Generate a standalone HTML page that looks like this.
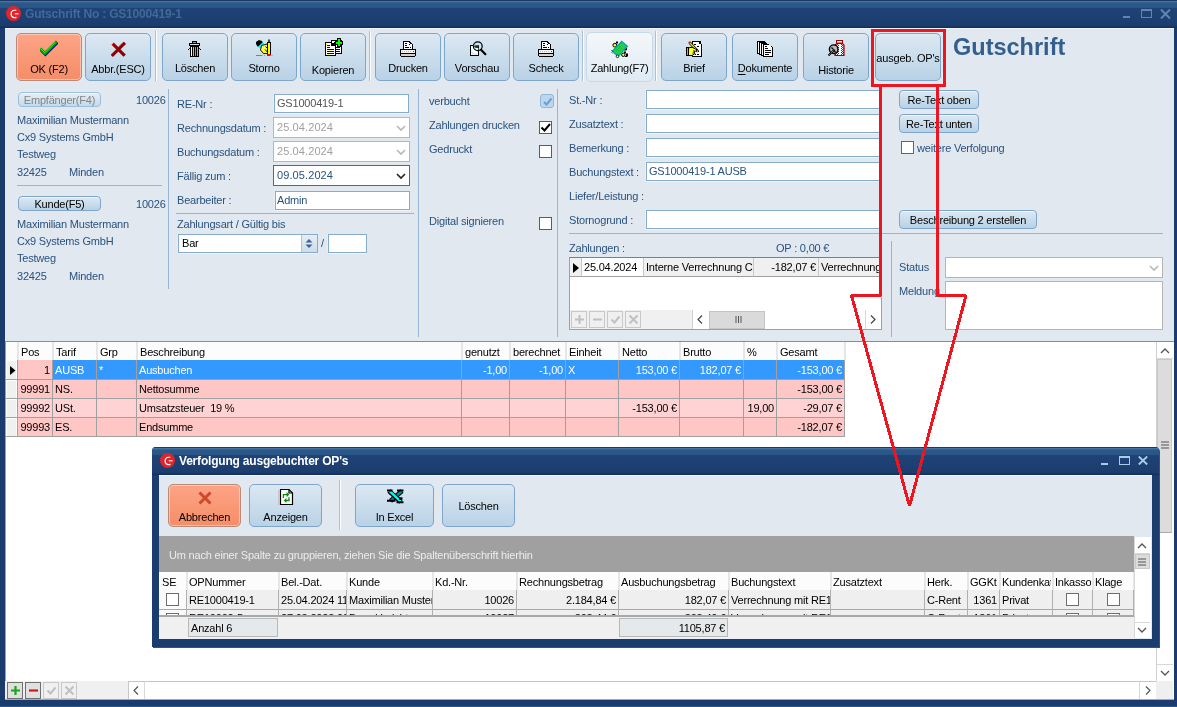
<!DOCTYPE html>
<html><head><meta charset="utf-8">
<style>
*{box-sizing:border-box;margin:0;padding:0}
html,body{width:1177px;height:707px;overflow:hidden}
#root{position:absolute;left:0;top:0;width:1177px;height:707px;will-change:transform}
body{position:relative;background:#1a3b6b;font-family:"Liberation Sans",sans-serif;font-size:11px;letter-spacing:-0.2px;color:#000}
.a{position:absolute}
.t{position:absolute;white-space:nowrap;line-height:13px}
.lbl{color:#28527f}
.tb{position:absolute;top:33px;width:66px;height:48px;border:1px solid #7ea5cb;border-radius:5px;background:linear-gradient(#dce8f2,#b9d2e6);text-align:center}
.tb .l{position:absolute;left:0;right:0;top:29px;line-height:13px;font-size:11px}
.tb svg{position:absolute;left:25px;top:8px}
.sep{position:absolute;width:2px;border-left:1px solid #a9c0d8;border-right:1px solid #fbfdff}
.inp{position:absolute;background:#fff;border:1px solid #87abcd;box-shadow:0 1px 0 rgba(255,255,255,.55),-1px 0 0 rgba(255,255,255,.3)}
.cmb{position:absolute;background:#fff;border:1px solid #b7b7b7}
.sb{position:absolute;height:19px;border:1px solid #7ea5cb;border-radius:4px;background:linear-gradient(#dce8f2,#b9d2e6);text-align:center;line-height:17px;padding-top:1px;box-shadow:inset 0 1px 0 rgba(255,255,255,.6)}
.chk{position:absolute;width:13px;height:13px;border:1px solid #5c5c5c;background:#fff}
.hl{position:absolute;height:1px;background:#97b5d5}
.vl{position:absolute;width:1px;background:#97b5d5}
</style></head><body><div id="root">
<!-- main title bar -->
<div class="a" style="left:0;top:0;width:1177px;height:28px;background:linear-gradient(#1c3a66 0px,#1c3a66 1px,#4a77a6 1px,#3f6c9b 2px,#2b5789 3px,#2a5587 7.5px,#1f4377 8.5px,#1c3c6d 26px,#10305f 27px,#10305f 28px)"></div>
<div class="a" style="left:6px;top:6px;width:15px;height:15px;border-radius:50%;background:#e0242b"></div>
<svg class="a" style="left:6px;top:6px" width="15" height="15" viewBox="0 0 15 15"><path d="M10.3 4.2 H8 A3.8 3.8 0 0 0 8 11.6 H9.6 L10.4 11" fill="none" stroke="#fff" stroke-width="1.1"/><path d="M8.8 7.8 H12.6" stroke="#fff" stroke-width="1.1"/></svg>
<div class="t" style="left:25px;top:7px;font-weight:bold;font-size:12px;color:#3e6b99;line-height:14px">Gutschrift No : GS1000419-1</div>
<div class="a" style="left:1123px;top:16px;width:7px;height:2px;background:#5d86b2"></div>
<div class="a" style="left:1141px;top:9px;width:11px;height:9px;border:1px solid #5d86b2;border-top-width:2px"></div>
<svg class="a" style="left:1160px;top:9px" width="11" height="10" viewBox="0 0 11 10"><path d="M1 0.5 L10 9.5 M10 0.5 L1 9.5" stroke="#5d86b2" stroke-width="2"/></svg>

<!-- content -->
<div class="a" style="left:5px;top:28px;width:1169px;height:672px;background:#e2e8f0;border-top:1px solid #f4f7fa"></div>


<!-- toolbar -->
<div class="tb" style="left:16px;border-color:#b98a78;background:linear-gradient(#fda486,#f58d68);box-shadow:inset 0 0 0 1px rgba(255,230,215,.55)"><svg width="18" height="18" viewBox="0 0 18 18" style="left:23px;top:6px"><path d="M1.6 10.6 L5.4 14.4 L16.4 3.4" fill="none" stroke="#000a80" stroke-width="3" stroke-linecap="square"/><path d="M1.2 9.6 L5 13.4 L15.8 2.6" fill="none" stroke="#089808" stroke-width="3" stroke-linecap="square"/><path d="M0.6 8.6 L5 13 M5.2 12.4 L15.4 2.2" fill="none" stroke="#2cff2c" stroke-width="1"/></svg><div class="l" style="top:29px">OK (F2)</div></div>
<div class="tb" style="left:85px"><svg width="16" height="16" viewBox="0 0 16 16" style="left:25px;top:8px"><path d="M2.8 2.8 L12.6 12.6 M12.8 1.9 L1.9 12.8" stroke="#880000" stroke-width="3.2" stroke-linecap="square"/><path d="M1.2 2.8 L2.8 1.2 M1.2 2.8 L5.5 7.1 M11.6 1.1 L6.9 5.8 M1.1 11.8 L4.9 8" stroke="#ff0c0c" stroke-width="0.9"/></svg><div class="l" style="top:29px">Abbr.(ESC)</div></div>
<div class="sep" style="left:155px;top:31px;height:50px"></div>
<div class="tb" style="left:162px"><svg width="14" height="17" viewBox="0 0 14 17" style="left:25px;top:7px" shape-rendering="crispEdges"><rect x="4" y="0" width="5" height="3" fill="#000"/><rect x="5" y="1" width="3" height="1" fill="#999"/><rect x="1" y="2" width="11" height="3" fill="#000"/><rect x="2" y="3" width="9" height="1" fill="#ddd"/><rect x="2" y="5" width="9" height="11" fill="#000"/><rect x="3" y="6" width="1" height="9" fill="#fff"/><rect x="5" y="6" width="1" height="9" fill="#bbb"/><rect x="7" y="6" width="1" height="9" fill="#999"/><rect x="9" y="6" width="1" height="9" fill="#aaa"/><rect x="0" y="8" width="1" height="1" fill="#000"/><rect x="12" y="8" width="1" height="1" fill="#000"/><rect x="1" y="7" width="1" height="1" fill="#333"/><rect x="11" y="7" width="1" height="1" fill="#333"/></svg><div class="l" style="top:28px">Löschen</div></div>
<div class="tb" style="left:231px"><svg width="24" height="20" viewBox="0 0 24 20" style="left:20px;top:4px"><path d="M4 4 L7 2 L10 3 L11.5 6 L8 9.5 L5.5 8.5 L4 6z" fill="#000"/><path d="M6 8.5 L10.8 4.2 L12 6.6 L7.6 10.4z" fill="#19f0f0"/><path d="M9.5 7.5 L15 6 L17 12.5 L15 15.5 L11.5 15.5 L8.5 12z" fill="#ffff00" stroke="#000" stroke-width="0.9"/><path d="M10 9h1M12 9h1M10 11h1M12 11h1M11 13h1" stroke="#fff" stroke-width="1"/><path d="M13.5 8.5 L16 11 M13 11.5 L15.5 14" stroke="#000" stroke-width="1"/><rect x="15.5" y="4.5" width="3" height="12" fill="#ffff00" stroke="#000" stroke-width="1"/><path d="M17 1.5 V4.5" stroke="#000" stroke-width="1.4"/><rect x="15" y="16" width="3.6" height="2" fill="#ff0000"/><path d="M4 17.5 H10.5" stroke="#808080" stroke-width="1"/><path d="M12 17.5h1M19.5 17.5h1" stroke="#999"/></svg><div class="l" style="top:28px">Storno</div></div>
<div class="tb" style="left:300px"><svg width="22" height="22" viewBox="0 0 22 22" style="left:21px;top:1px" shape-rendering="crispEdges"><rect x="9" y="5" width="11" height="14" fill="#000"/><rect x="10" y="6" width="9" height="12" fill="#fff"/><rect x="11" y="12" width="7" height="1" fill="#000080"/><rect x="11" y="14" width="7" height="1" fill="#000080"/><rect x="11" y="16" width="7" height="1" fill="#000080"/><rect x="3" y="7" width="11" height="14" fill="#000"/><rect x="4" y="8" width="9" height="12" fill="#fff"/><rect x="5" y="10" width="3" height="1" fill="#000080"/><rect x="5" y="12" width="3" height="1" fill="#000080"/><rect x="5" y="14" width="7" height="1" fill="#000080"/><rect x="5" y="16" width="7" height="1" fill="#000080"/><rect x="5" y="18" width="7" height="1" fill="#000080"/><rect x="9" y="7" width="4" height="4" fill="#000"/><rect x="10" y="6" width="2" height="2" fill="#fff"/><rect x="4" y="9" width="1" height="1" fill="#ff0"/><rect x="8" y="15" width="1" height="1" fill="#ff0"/><rect x="6" y="19" width="1" height="1" fill="#ff0"/><rect x="15" y="3" width="4" height="9" fill="#000"/><rect x="13" y="6" width="8" height="4" fill="#000"/><rect x="14" y="7" width="6" height="2" fill="#00ff00"/><rect x="16" y="4" width="2" height="7" fill="#00ff00"/></svg><div class="l" style="top:30px">Kopieren</div></div>
<div class="sep" style="left:369px;top:31px;height:50px"></div>
<div class="tb" style="left:375px"><svg width="16" height="16" viewBox="0 0 16 16" style="left:24px;top:7px" shape-rendering="crispEdges"><rect x="3" y="0" width="7" height="9" fill="#000"/><rect x="10" y="1" width="1" height="8" fill="#000"/><rect x="11" y="2" width="1" height="7" fill="#000"/><rect x="12" y="3" width="1" height="6" fill="#000"/><rect x="4" y="1" width="5" height="8" fill="#fff"/><rect x="9" y="3" width="3" height="6" fill="#fff"/><rect x="9" y="2" width="1" height="1" fill="#fff"/><rect x="5" y="2" width="2" height="1" fill="#000"/><rect x="5" y="4" width="2" height="1" fill="#000"/><rect x="5" y="6" width="4" height="1" fill="#000"/><rect x="10" y="6" width="1" height="1" fill="#000"/><rect x="9" y="3" width="1" height="1" fill="#000"/><rect x="0" y="8" width="16" height="7" fill="#000"/><rect x="1" y="9" width="14" height="3" fill="#f4f4f4"/><rect x="2" y="10" width="1" height="1" fill="#bbb"/><rect x="4" y="10" width="1" height="1" fill="#bbb"/><rect x="6" y="10" width="1" height="1" fill="#bbb"/><rect x="8" y="10" width="1" height="1" fill="#bbb"/><rect x="10" y="10" width="1" height="1" fill="#bbb"/><rect x="13" y="10" width="1" height="1" fill="#f00"/><rect x="1" y="13" width="14" height="2" fill="#d4d4d4"/><rect x="1" y="15" width="14" height="1" fill="#000"/></svg><div class="l" style="top:28px">Drucken</div></div>
<div class="tb" style="left:444px"><svg width="20" height="20" viewBox="0 0 20 20" style="left:23px;top:4px"><rect x="2.5" y="7.5" width="8" height="10" fill="#fff" stroke="#000" stroke-width="1"/><path d="M4 13 V16 H9" fill="none" stroke="#c4d8e8" stroke-width="1"/><circle cx="9.8" cy="8.2" r="4.4" fill="rgba(200,225,240,.35)" stroke="#000" stroke-width="1.2"/><path d="M6 8.5 H11 M6.5 9.5 H11" stroke="#000" stroke-width="0.8"/><path d="M5.8 8 L7.5 7 M6 9.6 L7.6 10" stroke="#00e8f0" stroke-width="1.1"/><path d="M13 11.8 L17.4 16.2" stroke="#000" stroke-width="2.2" stroke-linecap="round"/></svg><div class="l" style="top:28px">Vorschau</div></div>
<div class="tb" style="left:513px"><svg width="16" height="16" viewBox="0 0 16 16" style="left:24px;top:7px" shape-rendering="crispEdges"><rect x="3" y="0" width="7" height="9" fill="#000"/><rect x="10" y="1" width="1" height="8" fill="#000"/><rect x="11" y="2" width="1" height="7" fill="#000"/><rect x="12" y="3" width="1" height="6" fill="#000"/><rect x="4" y="1" width="5" height="8" fill="#fff"/><rect x="9" y="3" width="3" height="6" fill="#fff"/><rect x="9" y="2" width="1" height="1" fill="#fff"/><rect x="5" y="2" width="2" height="1" fill="#000"/><rect x="5" y="4" width="2" height="1" fill="#000"/><rect x="5" y="6" width="4" height="1" fill="#000"/><rect x="10" y="6" width="1" height="1" fill="#000"/><rect x="9" y="3" width="1" height="1" fill="#000"/><rect x="0" y="8" width="16" height="7" fill="#000"/><rect x="1" y="9" width="14" height="3" fill="#f4f4f4"/><rect x="2" y="10" width="1" height="1" fill="#bbb"/><rect x="4" y="10" width="1" height="1" fill="#bbb"/><rect x="6" y="10" width="1" height="1" fill="#bbb"/><rect x="8" y="10" width="1" height="1" fill="#bbb"/><rect x="10" y="10" width="1" height="1" fill="#bbb"/><rect x="13" y="10" width="1" height="1" fill="#f00"/><rect x="1" y="13" width="14" height="2" fill="#d4d4d4"/><rect x="1" y="15" width="14" height="1" fill="#000"/></svg><div class="l" style="top:28px">Scheck</div></div>
<div class="sep" style="left:582px;top:31px;height:50px"></div>
<div class="tb" style="left:586px;top:32px;width:67px;height:50px;border-color:#c4d9ea;background:linear-gradient(#f4f7fa,#dfeaf3)"><svg width="19" height="20" viewBox="0 0 19 20" style="left:24px;top:6px"><path d="M5 2.5h2v2h-2z M3 4.5h1v1h-1z" fill="#000"/><circle cx="3.8" cy="6.2" r="1.9" fill="#f8f050" stroke="#000" stroke-width="1"/><path d="M13 8.5h3v3h-3z M13 12.5h2v2h-2z M15 14.5h2v3h-2z M14 17h2v1h-2z" fill="#000"/><path d="M15 11.5h2v2h-2z" fill="#fff"/><circle cx="12.3" cy="15.8" r="1.7" fill="#f8f050" stroke="#000" stroke-width="1"/><path d="M1.5 12 L10.7 2.5 L16.3 7.3 L7 17.5 z" fill="#22d040" stroke="#00a8a8" stroke-width="1.4"/><path d="M5 12 L10 7 M7 13 L11 9" stroke="#2a8a50" stroke-width="0.7" stroke-dasharray="1 1"/><path d="M0.6 11.5 L1.6 12.5 M0.8 13.5 L1.6 14.3" stroke="#000" stroke-width="1"/><circle cx="6.5" cy="17.3" r="1.3" fill="#eee" stroke="#000" stroke-width="0.8"/></svg><div class="l" style="top:29px">Zahlung(F7)</div></div>
<div class="sep" style="left:655px;top:31px;height:50px"></div>
<div class="tb" style="left:661px"><svg width="18" height="19" viewBox="0 0 18 19" style="left:23px;top:5px" shape-rendering="crispEdges"><rect x="7" y="2" width="9" height="16" fill="#000"/><rect x="16" y="5" width="1" height="13" fill="#000"/><rect x="8" y="3" width="7" height="14" fill="#fff"/><rect x="15" y="5" width="1" height="12" fill="#fff"/><rect x="14" y="3" width="1" height="2" fill="#000"/><rect x="15" y="4" width="1" height="1" fill="#000"/><rect x="9" y="5" width="2" height="1" fill="#000"/><rect x="12" y="7" width="2" height="1" fill="#000"/><rect x="13" y="12" width="1" height="1" fill="#000"/><rect x="10" y="15" width="1" height="1" fill="#000"/><rect x="12" y="15" width="2" height="1" fill="#000"/></svg><svg width="18" height="19" viewBox="0 0 18 19" style="left:23px;top:5px"><path d="M4.5 3.5 L13 12.5" stroke="#000" stroke-width="2.6"/><path d="M4.5 3.5 L13 12.5" stroke="#f0f000" stroke-width="1.2"/><rect x="3.6" y="2.6" width="1.6" height="1.6" fill="#f00"/><path d="M3 9 L7 8.2 L10.5 10 L12.5 11 L10.5 12.2 L9 13 L10 14.5 L7 16.5 L3 16.5z" fill="#ffff30" stroke="#000" stroke-width="1"/><path d="M8 12 H10 M7.5 14 H9.5" stroke="#000" stroke-width="0.9"/><rect x="1.5" y="8.5" width="2" height="8" fill="#10e0f0" stroke="#000" stroke-width="1"/></svg><div class="l" style="top:28px">Brief</div></div>
<div class="tb" style="left:732px"><svg width="17" height="17" viewBox="0 0 17 17" style="left:24px;top:7px" shape-rendering="crispEdges"><path d="M0 0 H7 L16 6.5 V16 H6 V15 H4 V14 H2 V13 H0 Z" fill="#000"/><rect x="1" y="1" width="1" height="11" fill="#fff"/><rect x="3" y="2" width="1" height="11" fill="#fff"/><rect x="5" y="3" width="1" height="11" fill="#fff"/><rect x="7" y="4" width="6" height="11" fill="#fff"/><rect x="13" y="6" width="2" height="9" fill="#fff"/><rect x="8" y="5" width="2" height="1" fill="#000"/><rect x="8" y="7" width="3" height="1" fill="#000"/><rect x="8" y="9" width="6" height="1" fill="#000"/><rect x="8" y="11" width="6" height="1" fill="#000"/><rect x="8" y="13" width="4" height="1" fill="#000"/><rect x="13" y="5" width="1" height="1" fill="#fff"/></svg><div class="l" style="top:28px"><u style="text-decoration-thickness:1px;text-underline-offset:2px">D</u>okumente</div></div>
<div class="tb" style="left:803px"><svg width="21" height="20" viewBox="0 0 21 20" style="left:21px;top:4px"><defs><pattern id="chk" width="2" height="2" patternUnits="userSpaceOnUse"><rect width="2" height="2" fill="#fff"/><rect width="1" height="1" fill="#b01010"/><rect x="1" y="1" width="1" height="1" fill="#b01010"/></pattern></defs><rect x="11.5" y="2.5" width="6" height="2.5" fill="#fff" stroke="#a00000" stroke-width="1"/><path d="M12 5.5 H17.5 L19 7 V17.5 H10 V7 Z" fill="url(#chk)" stroke="#a00000" stroke-width="1.2"/><rect x="14" y="6" width="2" height="11" fill="#fff"/><circle cx="8.7" cy="11.2" r="4.3" fill="#b8b8b8" stroke="#000" stroke-width="1.4"/><path d="M6.5 9.5 L8 11 M9 12.5 L10.5 14" stroke="#000" stroke-width="1.2"/><path d="M3.5 17.5 L9.5 11.5" stroke="#000" stroke-width="1.8"/><path d="M4.5 16.5 L9 12" stroke="#fff" stroke-width="0.8" stroke-dasharray="1 1"/></svg><div class="l" style="top:30px">Historie</div></div>
<div class="tb" style="left:875px"><div class="l" style="top:18px">ausgeb. OP's</div></div>
<div class="t" style="left:953px;top:33px;font-size:23.5px;line-height:28px;font-weight:bold;color:#325f8e;letter-spacing:0">Gutschrift</div>


<!-- form left: Empfänger -->
<div class="sb" style="left:18px;top:92px;width:83px;height:15px;line-height:14px;padding-top:0;color:#858585;border-radius:4px;border-color:#98bfdd;background:linear-gradient(#e6eef5,#c6dae9)">Empfänger(F4)</div>
<div class="t lbl" style="left:136px;top:94px">10026</div>
<div class="t lbl" style="left:17px;top:114px">Maximilian Mustermann</div>
<div class="t lbl" style="left:17px;top:131px">Cx9 Systems GmbH</div>
<div class="t lbl" style="left:17px;top:148px">Testweg</div>
<div class="t lbl" style="left:17px;top:166px">32425</div>
<div class="t lbl" style="left:69px;top:166px">Minden</div>
<div class="hl" style="left:17px;top:185px;width:145px"></div>
<div class="sb" style="left:18px;top:196px;width:83px;height:15px;line-height:14px;padding-top:0;border-radius:4px">Kunde(F5)</div>
<div class="t lbl" style="left:136px;top:198px">10026</div>
<div class="t lbl" style="left:17px;top:218px">Maximilian Mustermann</div>
<div class="t lbl" style="left:17px;top:235px">Cx9 Systems GmbH</div>
<div class="t lbl" style="left:17px;top:252px">Testweg</div>
<div class="t lbl" style="left:17px;top:270px">32425</div>
<div class="t lbl" style="left:69px;top:270px">Minden</div>
<div class="vl" style="left:168px;top:89px;height:200px"></div>

<!-- form col 2 -->
<div class="t lbl" style="left:177px;top:98px">RE-Nr :</div>
<div class="t lbl" style="left:177px;top:122px">Rechnungsdatum :</div>
<div class="t lbl" style="left:177px;top:146px">Buchungsdatum :</div>
<div class="t lbl" style="left:177px;top:170px">Fällig zum :</div>
<div class="t lbl" style="left:177px;top:194px">Bearbeiter :</div>
<div class="inp" style="left:274px;top:94px;width:135px;height:19px"><div class="t" style="left:2px;top:2px;color:#555">GS1000419-1</div></div>
<div class="cmb" style="left:273px;top:117px;width:137px;height:21px"><div class="t" style="left:3px;top:3px;color:#a0a0a0;letter-spacing:0.1px">25.04.2024</div><svg class="a" style="left:122px;top:7px" width="10" height="7"><path d="M1 1 L5 5 L9 1" fill="none" stroke="#b8b8b8" stroke-width="1.6"/></svg></div>
<div class="cmb" style="left:273px;top:141px;width:137px;height:21px"><div class="t" style="left:3px;top:3px;color:#a0a0a0;letter-spacing:0.1px">25.04.2024</div><svg class="a" style="left:122px;top:7px" width="10" height="7"><path d="M1 1 L5 5 L9 1" fill="none" stroke="#b8b8b8" stroke-width="1.6"/></svg></div>
<div class="cmb" style="left:273px;top:165px;width:137px;height:21px;border-color:#646464"><div class="t" style="left:3px;top:3px;color:#28527f;letter-spacing:0.1px">09.05.2024</div><svg class="a" style="left:122px;top:7px" width="10" height="7"><path d="M1 1 L5 5 L9 1" fill="none" stroke="#222" stroke-width="1.6"/></svg></div>
<div class="inp" style="left:275px;top:191px;width:135px;height:19px"><div class="t" style="left:1px;top:2px;color:#28527f">Admin</div></div>
<div class="hl" style="left:176px;top:213px;width:238px"></div>
<div class="t lbl" style="left:177px;top:218px">Zahlungsart / Gültig bis</div>
<div class="inp" style="left:178px;top:234px;width:140px;height:19px"><div class="t" style="left:3px;top:2px">Bar</div><div class="a" style="left:122px;top:0;width:16px;height:17px;background:linear-gradient(#e6eef5,#cddcea);border-left:1px solid #a9c3dc"></div><svg class="a" style="left:125px;top:3px" width="10" height="12"><path d="M1.5 4.5 L5 1 L8.5 4.5z M1.5 6.5 L5 10 L8.5 6.5z" fill="#3d6592"/></svg></div>
<div class="t lbl" style="left:321px;top:237px">/</div>
<div class="inp" style="left:328px;top:234px;width:39px;height:19px"></div>
<div class="vl" style="left:418px;top:89px;height:248px"></div>

<!-- form col 3 -->
<div class="t lbl" style="left:429px;top:95px">verbucht</div>
<div class="t lbl" style="left:429px;top:119px">Zahlungen drucken</div>
<div class="t lbl" style="left:429px;top:143px">Gedruckt</div>
<div class="t lbl" style="left:429px;top:215px">Digital signieren</div>
<div class="chk" style="left:540px;top:94px;width:14px;height:14px;border-color:#8fb8dc;background:#bcd6ee;border-radius:3px"><svg class="a" style="left:1px;top:1px" width="11" height="11"><path d="M2 6 L4.5 8.5 L9.5 2.5" fill="none" stroke="#6d9fd2" stroke-width="2"/></svg></div>
<div class="chk" style="left:539px;top:121px"><svg class="a" style="left:0px;top:0px" width="11" height="11"><path d="M1.5 5.5 L4.5 8.5 L10 2" fill="none" stroke="#000" stroke-width="2"/></svg></div>
<div class="chk" style="left:539px;top:145px"></div>
<div class="chk" style="left:539px;top:217px"></div>
<div class="vl" style="left:557px;top:89px;height:248px"></div>

<!-- form col 4 -->
<div class="t lbl" style="left:569px;top:94px">St.-Nr :</div>
<div class="t lbl" style="left:569px;top:118px">Zusatztext :</div>
<div class="t lbl" style="left:569px;top:142px">Bemerkung :</div>
<div class="t lbl" style="left:569px;top:166px">Buchungstext :</div>
<div class="t lbl" style="left:569px;top:190px">Liefer/Leistung :</div>
<div class="t lbl" style="left:569px;top:214px">Stornogrund :</div>
<div class="inp" style="left:646px;top:90px;width:236px;height:19px"></div>
<div class="inp" style="left:646px;top:114px;width:236px;height:19px"></div>
<div class="inp" style="left:646px;top:138px;width:236px;height:19px"></div>
<div class="inp" style="left:646px;top:162px;width:236px;height:19px"><div class="t" style="left:2px;top:2px;color:#28527f">GS1000419-1 AUSB</div></div>
<div class="inp" style="left:646px;top:210px;width:236px;height:19px"></div>
<div class="hl" style="left:569px;top:233px;width:594px"></div>

<div class="sb" style="left:899px;top:90px;width:80px;height:19px">Re-Text oben</div>
<div class="sb" style="left:899px;top:114px;width:80px;height:19px">Re-Text unten</div>
<div class="chk" style="left:901px;top:141px;border-color:#646464"></div>
<div class="t lbl" style="left:917px;top:142px">weitere Verfolgung</div>
<div class="sb" style="left:899px;top:210px;width:138px;height:19px">Beschreibung 2 erstellen</div>

<!-- Zahlungen grid -->
<div class="t lbl" style="left:569px;top:242px">Zahlungen :</div>
<div class="t lbl" style="left:776px;top:242px">OP : 0,00 €</div>
<div class="a" style="left:569px;top:257px;width:313px;height:73px;background:#fff;border:1px solid #a0a0a0;border-top-color:#808080"></div>
<div class="a" style="left:570px;top:258px;width:12px;height:19px;background:#f0f0f0;border-right:1px solid #c8c8c8;border-bottom:1px solid #a0a0a0"></div>
<svg class="a" style="left:573px;top:263px" width="6" height="10"><path d="M0 0 L6 5 L0 10z" fill="#000"/></svg>
<div class="a" style="left:582px;top:258px;width:62px;height:19px;background:#fff;border-right:1px solid #c8c8c8;border-bottom:1px solid #a0a0a0"><div class="t" style="left:2px;top:3px">25.04.2024</div></div>
<div class="a" style="left:644px;top:258px;width:110px;height:19px;background:#f0f0f0;border-right:1px solid #c8c8c8;border-bottom:1px solid #a0a0a0;overflow:hidden"><div class="t" style="left:2px;top:3px">Interne Verrechnung C</div></div>
<div class="a" style="left:754px;top:258px;width:65px;height:19px;background:#f0f0f0;border-right:1px solid #c8c8c8;border-bottom:1px solid #a0a0a0"><div class="t" style="right:2px;top:3px">-182,07 €</div></div>
<div class="a" style="left:819px;top:258px;width:62px;height:19px;background:#f0f0f0;border-bottom:1px solid #a0a0a0;overflow:hidden"><div class="t" style="left:2px;top:3px">Verrechnung</div></div>
<div class="a" style="left:570px;top:310px;width:311px;height:19px;background:#f0f0f0"></div>
<div class="a" style="left:692px;top:310px;width:189px;height:19px;background:#fff;border-left:1px solid #d0d0d0"></div>
<div class="a" style="left:709px;top:311px;width:56px;height:18px;background:#dadada;border:1px solid #c4c4c4"></div>
<div class="a" style="left:865px;top:310px;width:1px;height:19px;background:#d8d8d8"></div>


<!-- zahlungen navigator -->
<div class="a" style="left:571px;top:311px;width:16px;height:17px;border:1px solid #c8c8c8;background:#f0f0f0"><svg class="a" style="left:2px;top:2px" width="11" height="11"><path d="M5.5 1v9M1 5.5h9" stroke="#c0c0c0" stroke-width="2"/></svg></div>
<div class="a" style="left:589px;top:311px;width:16px;height:17px;border:1px solid #c8c8c8;background:#f0f0f0"><svg class="a" style="left:2px;top:2px" width="11" height="11"><path d="M1 5.5h9" stroke="#c0c0c0" stroke-width="2"/></svg></div>
<div class="a" style="left:607px;top:311px;width:16px;height:17px;border:1px solid #c8c8c8;background:#f0f0f0"><svg class="a" style="left:2px;top:2px" width="11" height="11"><path d="M1.5 5.5 L4.5 8.5 L9.5 2.5" fill="none" stroke="#c0c0c0" stroke-width="2"/></svg></div>
<div class="a" style="left:625px;top:311px;width:16px;height:17px;border:1px solid #c8c8c8;background:#f0f0f0"><svg class="a" style="left:2px;top:2px" width="11" height="11"><path d="M1.5 1.5 L9.5 9.5 M9.5 1.5 L1.5 9.5" fill="none" stroke="#c0c0c0" stroke-width="2"/></svg></div>
<svg class="a" style="left:697px;top:315px" width="6" height="9"><path d="M5 0.5 L1 4.5 L5 8.5" fill="none" stroke="#444" stroke-width="1.2"/></svg>
<svg class="a" style="left:735px;top:316px" width="7" height="7"><path d="M1 0v7M3.5 0v7M6 0v7" stroke="#555" stroke-width="1"/></svg>
<svg class="a" style="left:870px;top:315px" width="6" height="9"><path d="M1 0.5 L5 4.5 L1 8.5" fill="none" stroke="#444" stroke-width="1.2"/></svg>

<!-- status section -->
<div class="vl" style="left:891px;top:241px;height:96px"></div>
<div class="t lbl" style="left:899px;top:261px">Status</div>
<div class="t lbl" style="left:899px;top:285px">Meldung</div>
<div class="cmb" style="left:945px;top:257px;width:218px;height:21px;border-color:#b4b4b4"><svg class="a" style="left:203px;top:7px" width="10" height="7"><path d="M1 1 L5 5 L9 1" fill="none" stroke="#b8b8b8" stroke-width="1.6"/></svg></div>
<div class="cmb" style="left:945px;top:281px;width:218px;height:49px;border-color:#b4b4b4"></div>

<!-- main grid -->
<div class="a" style="left:5px;top:341px;width:1169px;height:359px;background:#fff;border-top:1px solid #8c8c8c;border-left:1px solid #a0a0a0"></div>

<!-- main grid rows -->
<div class="a" style="left:6px;top:342px;width:839px;height:18px;background:#fcfcfc"></div>
<div class="a" style="left:17px;top:342px;width:2px;height:18px;background:#e6e6e6"></div>
<div class="a" style="left:52px;top:342px;width:2px;height:18px;background:#e6e6e6"></div>
<div class="a" style="left:96px;top:342px;width:2px;height:18px;background:#e6e6e6"></div>
<div class="a" style="left:136px;top:342px;width:2px;height:18px;background:#e6e6e6"></div>
<div class="a" style="left:461px;top:342px;width:2px;height:18px;background:#e6e6e6"></div>
<div class="a" style="left:509px;top:342px;width:2px;height:18px;background:#e6e6e6"></div>
<div class="a" style="left:565px;top:342px;width:2px;height:18px;background:#e6e6e6"></div>
<div class="a" style="left:618px;top:342px;width:2px;height:18px;background:#e6e6e6"></div>
<div class="a" style="left:679px;top:342px;width:2px;height:18px;background:#e6e6e6"></div>
<div class="a" style="left:743px;top:342px;width:2px;height:18px;background:#e6e6e6"></div>
<div class="a" style="left:776px;top:342px;width:2px;height:18px;background:#e6e6e6"></div>
<div class="a" style="left:844px;top:342px;width:2px;height:18px;background:#e6e6e6"></div>
<div class="t" style="left:21px;top:346px">Pos</div>
<div class="t" style="left:56px;top:346px">Tarif</div>
<div class="t" style="left:100px;top:346px">Grp</div>
<div class="t" style="left:140px;top:346px">Beschreibung</div>
<div class="t" style="left:465px;top:346px">genutzt</div>
<div class="t" style="left:513px;top:346px">berechnet</div>
<div class="t" style="left:569px;top:346px">Einheit</div>
<div class="t" style="left:622px;top:346px">Netto</div>
<div class="t" style="left:683px;top:346px">Brutto</div>
<div class="t" style="left:747px;top:346px">%</div>
<div class="t" style="left:780px;top:346px">Gesamt</div>
<div class="a" style="left:6px;top:360px;width:11px;height:19px;background:#f0f0f0;border-left:1px solid #fff;border-top:1px solid #fff;border-right:1px solid #fff"></div>
<div class="a" style="left:18px;top:360px;width:34px;height:19px;background:#ffc6c6"><div class="t" style="right:2px;top:4px;color:#000">1</div></div>
<div class="a" style="left:53px;top:360px;width:43px;height:19px;background:#3399ff"><div class="t" style="left:2px;top:4px;color:#fff">AUSB</div></div>
<div class="a" style="left:97px;top:360px;width:39px;height:19px;background:#3399ff"><div class="t" style="left:2px;top:4px;color:#fff">*</div></div>
<div class="a" style="left:137px;top:360px;width:324px;height:19px;background:#3399ff"><div class="t" style="left:2px;top:4px;color:#fff">Ausbuchen</div></div>
<div class="a" style="left:462px;top:360px;width:47px;height:19px;background:#3399ff"><div class="t" style="right:2px;top:4px;color:#fff">-1,00</div></div>
<div class="a" style="left:510px;top:360px;width:55px;height:19px;background:#3399ff"><div class="t" style="right:2px;top:4px;color:#fff">-1,00</div></div>
<div class="a" style="left:566px;top:360px;width:52px;height:19px;background:#3399ff"><div class="t" style="left:2px;top:4px;color:#fff">X</div></div>
<div class="a" style="left:619px;top:360px;width:60px;height:19px;background:#3399ff"><div class="t" style="right:2px;top:4px;color:#fff">153,00 €</div></div>
<div class="a" style="left:680px;top:360px;width:63px;height:19px;background:#3399ff"><div class="t" style="right:2px;top:4px;color:#fff">182,07 €</div></div>
<div class="a" style="left:744px;top:360px;width:32px;height:19px;background:#3399ff"></div>
<div class="a" style="left:777px;top:360px;width:67px;height:19px;background:#3399ff"><div class="t" style="right:2px;top:4px;color:#fff">-153,00 €</div></div>
<div class="a" style="left:6px;top:379px;width:839px;height:1px;background:#a0a0a0"></div>
<div class="a" style="left:6px;top:380px;width:11px;height:18px;background:#f0f0f0;border-left:1px solid #fff;border-top:1px solid #fff;border-right:1px solid #fff"></div>
<div class="a" style="left:18px;top:380px;width:34px;height:18px;background:#ffc6c6"><div class="t" style="right:2px;top:3px;color:#000">99991</div></div>
<div class="a" style="left:53px;top:380px;width:43px;height:18px;background:#ffc6c6"><div class="t" style="left:2px;top:3px;color:#000">NS.</div></div>
<div class="a" style="left:97px;top:380px;width:39px;height:18px;background:#ffc6c6"></div>
<div class="a" style="left:137px;top:380px;width:324px;height:18px;background:#ffc6c6"><div class="t" style="left:2px;top:3px;color:#000">Nettosumme</div></div>
<div class="a" style="left:462px;top:380px;width:47px;height:18px;background:#ffc6c6"></div>
<div class="a" style="left:510px;top:380px;width:55px;height:18px;background:#ffc6c6"></div>
<div class="a" style="left:566px;top:380px;width:52px;height:18px;background:#ffc6c6"></div>
<div class="a" style="left:619px;top:380px;width:60px;height:18px;background:#ffc6c6"></div>
<div class="a" style="left:680px;top:380px;width:63px;height:18px;background:#ffc6c6"></div>
<div class="a" style="left:744px;top:380px;width:32px;height:18px;background:#ffc6c6"></div>
<div class="a" style="left:777px;top:380px;width:67px;height:18px;background:#ffc6c6"><div class="t" style="right:2px;top:3px;color:#000">-153,00 €</div></div>
<div class="a" style="left:6px;top:398px;width:839px;height:1px;background:#a0a0a0"></div>
<div class="a" style="left:6px;top:399px;width:11px;height:18px;background:#f0f0f0;border-left:1px solid #fff;border-top:1px solid #fff;border-right:1px solid #fff"></div>
<div class="a" style="left:18px;top:399px;width:34px;height:18px;background:#ffd3d3"><div class="t" style="right:2px;top:3px;color:#000">99992</div></div>
<div class="a" style="left:53px;top:399px;width:43px;height:18px;background:#ffd3d3"><div class="t" style="left:2px;top:3px;color:#000">USt.</div></div>
<div class="a" style="left:97px;top:399px;width:39px;height:18px;background:#ffd3d3"></div>
<div class="a" style="left:137px;top:399px;width:324px;height:18px;background:#ffd3d3"><div class="t" style="left:2px;top:3px;color:#000">Umsatzsteuer&nbsp; 19 %</div></div>
<div class="a" style="left:462px;top:399px;width:47px;height:18px;background:#ffd3d3"></div>
<div class="a" style="left:510px;top:399px;width:55px;height:18px;background:#ffd3d3"></div>
<div class="a" style="left:566px;top:399px;width:52px;height:18px;background:#ffd3d3"></div>
<div class="a" style="left:619px;top:399px;width:60px;height:18px;background:#ffd3d3"><div class="t" style="right:2px;top:3px;color:#000">-153,00 €</div></div>
<div class="a" style="left:680px;top:399px;width:63px;height:18px;background:#ffd3d3"></div>
<div class="a" style="left:744px;top:399px;width:32px;height:18px;background:#ffd3d3"><div class="t" style="right:2px;top:3px;color:#000">19,00</div></div>
<div class="a" style="left:777px;top:399px;width:67px;height:18px;background:#ffd3d3"><div class="t" style="right:2px;top:3px;color:#000">-29,07 €</div></div>
<div class="a" style="left:6px;top:417px;width:839px;height:1px;background:#a0a0a0"></div>
<div class="a" style="left:6px;top:418px;width:11px;height:18px;background:#f0f0f0;border-left:1px solid #fff;border-top:1px solid #fff;border-right:1px solid #fff"></div>
<div class="a" style="left:18px;top:418px;width:34px;height:18px;background:#ffc6c6"><div class="t" style="right:2px;top:3px;color:#000">99993</div></div>
<div class="a" style="left:53px;top:418px;width:43px;height:18px;background:#ffc6c6"><div class="t" style="left:2px;top:3px;color:#000">ES.</div></div>
<div class="a" style="left:97px;top:418px;width:39px;height:18px;background:#ffc6c6"></div>
<div class="a" style="left:137px;top:418px;width:324px;height:18px;background:#ffc6c6"><div class="t" style="left:2px;top:3px;color:#000">Endsumme</div></div>
<div class="a" style="left:462px;top:418px;width:47px;height:18px;background:#ffc6c6"></div>
<div class="a" style="left:510px;top:418px;width:55px;height:18px;background:#ffc6c6"></div>
<div class="a" style="left:566px;top:418px;width:52px;height:18px;background:#ffc6c6"></div>
<div class="a" style="left:619px;top:418px;width:60px;height:18px;background:#ffc6c6"></div>
<div class="a" style="left:680px;top:418px;width:63px;height:18px;background:#ffc6c6"></div>
<div class="a" style="left:744px;top:418px;width:32px;height:18px;background:#ffc6c6"></div>
<div class="a" style="left:777px;top:418px;width:67px;height:18px;background:#ffc6c6"><div class="t" style="right:2px;top:3px;color:#000">-182,07 €</div></div>
<div class="a" style="left:6px;top:436px;width:839px;height:1px;background:#a0a0a0"></div>
<div class="a" style="left:17px;top:360px;width:1px;height:77px;background:#a0a0a0"></div>
<div class="a" style="left:52px;top:360px;width:1px;height:77px;background:#a0a0a0"></div>
<div class="a" style="left:96px;top:360px;width:1px;height:77px;background:#a0a0a0"></div>
<div class="a" style="left:136px;top:360px;width:1px;height:77px;background:#a0a0a0"></div>
<div class="a" style="left:461px;top:360px;width:1px;height:77px;background:#a0a0a0"></div>
<div class="a" style="left:509px;top:360px;width:1px;height:77px;background:#a0a0a0"></div>
<div class="a" style="left:565px;top:360px;width:1px;height:77px;background:#a0a0a0"></div>
<div class="a" style="left:618px;top:360px;width:1px;height:77px;background:#a0a0a0"></div>
<div class="a" style="left:679px;top:360px;width:1px;height:77px;background:#a0a0a0"></div>
<div class="a" style="left:743px;top:360px;width:1px;height:77px;background:#a0a0a0"></div>
<div class="a" style="left:776px;top:360px;width:1px;height:77px;background:#a0a0a0"></div>
<div class="a" style="left:844px;top:360px;width:1px;height:77px;background:#a0a0a0"></div>
<svg class="a" style="left:10px;top:366px" width="6" height="9"><path d="M0 0 L5.5 4.5 L0 9z" fill="#000"/></svg>
<div class="a" style="left:1156px;top:342px;width:17px;height:339px;background:#fff;border-left:1px solid #d0d0d0"></div>
<div class="a" style="left:1157px;top:342px;width:16px;height:17px;background:#fff;border-bottom:1px solid #d8d8d8"></div>
<svg class="a" style="left:1160px;top:347px" width="10" height="7"><path d="M1 6 L5 2 L9 6" fill="none" stroke="#555" stroke-width="1.3"/></svg>
<div class="a" style="left:1157px;top:359px;width:15px;height:174px;background:#dcdcdc;border:1px solid #c8c8c8;border-bottom-color:#a8a8a8"></div>
<svg class="a" style="left:1161px;top:441px" width="8" height="8"><path d="M0 1h8M0 4h8M0 7h8" stroke="#555" stroke-width="1.2"/></svg>
<div class="a" style="left:1157px;top:664px;width:16px;height:17px;background:#fff;border-top:1px solid #d8d8d8"></div>
<svg class="a" style="left:1160px;top:670px" width="10" height="7"><path d="M1 1 L5 5 L9 1" fill="none" stroke="#555" stroke-width="1.3"/></svg>
<div class="a" style="left:5px;top:681px;width:1151px;height:19px;background:#f0f0f0"></div>
<div class="a" style="left:1156px;top:681px;width:17px;height:19px;background:#efefef"></div>
<div class="a" style="left:128px;top:681px;width:1028px;height:19px;background:#fff;border-left:1px solid #c8c8c8;border-top:1px solid #c4c4c4"></div>
<div class="a" style="left:144px;top:681px;width:1px;height:19px;background:#d8d8d8"></div>
<div class="a" style="left:1139px;top:681px;width:1px;height:19px;background:#d8d8d8"></div>
<svg class="a" style="left:133px;top:686px" width="6" height="9"><path d="M5 0.5 L1 4.5 L5 8.5" fill="none" stroke="#555" stroke-width="1.2"/></svg>
<svg class="a" style="left:1145px;top:686px" width="6" height="9"><path d="M1 0.5 L5 4.5 L1 8.5" fill="none" stroke="#555" stroke-width="1.2"/></svg>
<div class="a" style="left:7px;top:682px;width:16px;height:17px;border:1px solid #707070;background:#e0e0e0"><svg class="a" style="left:2px;top:2px" width="11" height="11"><path d="M5.5 1v9M1 5.5h9" stroke="#1aa51a" stroke-width="2.2"/></svg></div>
<div class="a" style="left:25px;top:682px;width:16px;height:17px;border:1px solid #707070;background:#e0e0e0"><svg class="a" style="left:2px;top:2px" width="11" height="11"><path d="M1 5.5h9" stroke="#d01818" stroke-width="2.2"/></svg></div>
<div class="a" style="left:43px;top:682px;width:16px;height:17px;border:1px solid #c8c8c8;background:#f0f0f0"><svg class="a" style="left:2px;top:2px" width="11" height="11"><path d="M1.5 5.5 L4.5 8.5 L9.5 2.5" fill="none" stroke="#c0c0c0" stroke-width="2"/></svg></div>
<div class="a" style="left:61px;top:682px;width:16px;height:17px;border:1px solid #c8c8c8;background:#f0f0f0"><svg class="a" style="left:2px;top:2px" width="11" height="11"><path d="M1.5 1.5 L9.5 9.5 M9.5 1.5 L1.5 9.5" fill="none" stroke="#c0c0c0" stroke-width="2"/></svg></div>
<div class="a" style="left:5px;top:699px;width:1169px;height:1px;background:#a8a8a8"></div>
<div class="a" style="left:0;top:706px;width:1177px;height:1px;background:#2b568a"></div>
<!-- dialog -->
<div class="a" style="left:152px;top:447px;width:1007px;height:200px;background:#1b3d6e;border-radius:4px 4px 0 0;box-shadow:1px 1px 0 #2a5586"></div>
<div class="a" style="left:152px;top:447px;width:1007px;height:28px;border-radius:4px 4px 0 0;background:linear-gradient(#1c3a66 0px,#1c3a66 1px,#4a77a6 1px,#3f6c9b 2px,#2b5789 3px,#2a5587 7.5px,#1f4377 8.5px,#1c3c6d 26px,#10305f 27px,#10305f 28px)"></div>
<div class="a" style="left:160px;top:453px;width:15px;height:15px;border-radius:50%;background:#e0242b"></div>
<svg class="a" style="left:160px;top:453px" width="15" height="15" viewBox="0 0 15 15"><path d="M10.3 4.2 H8 A3.8 3.8 0 0 0 8 11.6 H9.6 L10.4 11" fill="none" stroke="#fff" stroke-width="1.1"/><path d="M8.8 7.8 H12.6" stroke="#fff" stroke-width="1.1"/></svg>
<div class="t" style="left:179px;top:454px;font-weight:bold;font-size:12px;color:#fff;line-height:14px">Verfolgung ausgebuchter OP's</div>
<div class="a" style="left:1101px;top:463px;width:7px;height:2px;background:#a9cce8"></div>
<div class="a" style="left:1119px;top:456px;width:11px;height:9px;border:1px solid #a9cce8;border-top-width:2px"></div>
<svg class="a" style="left:1138px;top:456px" width="10" height="9" viewBox="0 0 10 9"><path d="M0.8 0.5 L9.2 8.5 M9.2 0.5 L0.8 8.5" stroke="#a9cce8" stroke-width="1.9"/></svg>
<div class="a" style="left:159px;top:475px;width:993px;height:164px;background:#e2e8f0;border-top:1px solid #f4f7fa"></div>
<div class="tb" style="left:168px;top:484px;width:73px;height:43px;border-color:#b98a78;background:linear-gradient(#fda486,#f58d68);box-shadow:inset 0 0 0 1px rgba(255,230,215,.5)"><svg width="16" height="16" viewBox="0 0 16 16" style="left:28px;top:5px"><path d="M2.5 2.5 L13.5 13.5 M13.5 2.5 L2.5 13.5" stroke="#cc4a2c" stroke-width="3"/></svg><div class="l" style="top:26px">Abbrechen</div></div>
<div class="tb" style="left:249px;top:484px;width:73px;height:43px"><svg width="17" height="19" viewBox="0 0 17 19" style="left:28px;top:3px"><path d="M0.5 2 V17" stroke="#c8c8c8" stroke-width="1"/><path d="M2.5 1.5 H11 L14.5 5 V16.5 H2.5 Z" fill="#fff" stroke="#000" stroke-width="1.2"/><path d="M11 1.5 V5 H14.5" fill="none" stroke="#000" stroke-width="1.2"/><path d="M5.4 10 V6.6 H9" fill="none" stroke="#0a8a0a" stroke-width="1.3"/><path d="M8.6 4 L11.3 6.6 L8.6 9.2z" fill="#0a8a0a"/><path d="M11 9.2 V12.5 H8" fill="none" stroke="#0a8a0a" stroke-width="1.3"/><path d="M8.4 9.9 L5.7 12.5 L8.4 15.1z" fill="#0a8a0a"/></svg><div class="l" style="top:26px">Anzeigen</div></div>
<div class="sep" style="left:339px;top:480px;height:50px"></div>
<div class="tb" style="left:355px;top:484px;width:79px;height:43px"><svg width="17" height="15" viewBox="0 0 17 15" style="left:31px;top:4px"><path d="M15 2 L3.5 12" stroke="#000" stroke-width="4.6"/><path d="M15 2 L3.5 12" stroke="#0a8f8f" stroke-width="2.4"/><path d="M2 2 L14 13" stroke="#000" stroke-width="4.6"/><path d="M2.6 2.2 L13.6 12.4" stroke="#10f4f4" stroke-width="2.4"/><path d="M0 1.5 H5.5 M10 1.5 H16.5 M0 11.8 H8.5 M9.5 13.2 H16.5" stroke="#000" stroke-width="2"/><path d="M12 9.5 L15.5 9.5" stroke="#000" stroke-width="2.4"/></svg><div class="l" style="top:26px">In Excel</div></div>
<div class="tb" style="left:442px;top:484px;width:73px;height:43px"><div class="l" style="top:15px">Löschen</div></div>
<div class="a" style="left:159px;top:536px;width:975px;height:36px;background:#a0a0a0"></div>
<div class="t" style="left:169px;top:549px;color:#ececec">Um nach einer Spalte zu gruppieren, ziehen Sie die Spaltenüberschrift hierhin</div>

<div class="a" style="left:159px;top:572px;width:975px;height:18px;background:#fcfcfc"></div>
<div class="a" style="left:1133px;top:572px;width:1px;height:45px;background:#fff"></div>
<div class="a" style="left:186px;top:572px;width:2px;height:18px;background:#e6e6e6"></div>
<div class="a" style="left:161px;top:572px;width:24px;height:18px;overflow:hidden"><div class="t" style="left:1px;top:4px">SE</div></div>
<div class="a" style="left:278px;top:572px;width:2px;height:18px;background:#e6e6e6"></div>
<div class="a" style="left:188px;top:572px;width:89px;height:18px;overflow:hidden"><div class="t" style="left:1px;top:4px">OPNummer</div></div>
<div class="a" style="left:346px;top:572px;width:2px;height:18px;background:#e6e6e6"></div>
<div class="a" style="left:280px;top:572px;width:65px;height:18px;overflow:hidden"><div class="t" style="left:1px;top:4px">Bel.-Dat.</div></div>
<div class="a" style="left:432px;top:572px;width:2px;height:18px;background:#e6e6e6"></div>
<div class="a" style="left:348px;top:572px;width:83px;height:18px;overflow:hidden"><div class="t" style="left:1px;top:4px">Kunde</div></div>
<div class="a" style="left:516px;top:572px;width:2px;height:18px;background:#e6e6e6"></div>
<div class="a" style="left:434px;top:572px;width:81px;height:18px;overflow:hidden"><div class="t" style="left:1px;top:4px">Kd.-Nr.</div></div>
<div class="a" style="left:618px;top:572px;width:2px;height:18px;background:#e6e6e6"></div>
<div class="a" style="left:518px;top:572px;width:99px;height:18px;overflow:hidden"><div class="t" style="left:1px;top:4px">Rechnungsbetrag</div></div>
<div class="a" style="left:728px;top:572px;width:2px;height:18px;background:#e6e6e6"></div>
<div class="a" style="left:620px;top:572px;width:107px;height:18px;overflow:hidden"><div class="t" style="left:1px;top:4px">Ausbuchungsbetrag</div></div>
<div class="a" style="left:830px;top:572px;width:2px;height:18px;background:#e6e6e6"></div>
<div class="a" style="left:730px;top:572px;width:99px;height:18px;overflow:hidden"><div class="t" style="left:1px;top:4px">Buchungstext</div></div>
<div class="a" style="left:924px;top:572px;width:2px;height:18px;background:#e6e6e6"></div>
<div class="a" style="left:832px;top:572px;width:91px;height:18px;overflow:hidden"><div class="t" style="left:1px;top:4px">Zusatztext</div></div>
<div class="a" style="left:967px;top:572px;width:2px;height:18px;background:#e6e6e6"></div>
<div class="a" style="left:926px;top:572px;width:40px;height:18px;overflow:hidden"><div class="t" style="left:1px;top:4px">Herk.</div></div>
<div class="a" style="left:999px;top:572px;width:2px;height:18px;background:#e6e6e6"></div>
<div class="a" style="left:969px;top:572px;width:29px;height:18px;overflow:hidden"><div class="t" style="left:1px;top:4px">GGKt</div></div>
<div class="a" style="left:1052px;top:572px;width:2px;height:18px;background:#e6e6e6"></div>
<div class="a" style="left:1001px;top:572px;width:50px;height:18px;overflow:hidden"><div class="t" style="left:1px;top:4px">Kundenkat</div></div>
<div class="a" style="left:1092px;top:572px;width:2px;height:18px;background:#e6e6e6"></div>
<div class="a" style="left:1054px;top:572px;width:37px;height:18px;overflow:hidden"><div class="t" style="left:1px;top:4px">Inkasso</div></div>
<div class="a" style="left:1133px;top:572px;width:2px;height:18px;background:#e6e6e6"></div>
<div class="a" style="left:1094px;top:572px;width:38px;height:18px;overflow:hidden"><div class="t" style="left:1px;top:4px">Klage</div></div>
<div class="a" style="left:159px;top:590px;width:27px;height:19px;background:#fafafa;overflow:hidden"><div class="chk" style="left:7px;top:3px;border-color:#6e6e6e"></div></div>
<div class="a" style="left:187px;top:590px;width:91px;height:19px;background:#efefef;overflow:hidden"><div class="t" style="left:2px;top:4px">RE1000419-1</div></div>
<div class="a" style="left:279px;top:590px;width:67px;height:19px;background:#efefef;overflow:hidden"><div class="t" style="left:2px;top:4px">25.04.2024 11:</div></div>
<div class="a" style="left:347px;top:590px;width:85px;height:19px;background:#efefef;overflow:hidden"><div class="t" style="left:2px;top:4px">Maximilian Mustermann</div></div>
<div class="a" style="left:433px;top:590px;width:83px;height:19px;background:#efefef;overflow:hidden"><div class="t" style="right:2px;top:4px">10026</div></div>
<div class="a" style="left:517px;top:590px;width:101px;height:19px;background:#efefef;overflow:hidden"><div class="t" style="right:2px;top:4px">2.184,84 €</div></div>
<div class="a" style="left:619px;top:590px;width:109px;height:19px;background:#efefef;overflow:hidden"><div class="t" style="right:2px;top:4px">182,07 €</div></div>
<div class="a" style="left:729px;top:590px;width:101px;height:19px;background:#efefef;overflow:hidden"><div class="t" style="left:2px;top:4px">Verrechnung mit RE1000</div></div>
<div class="a" style="left:831px;top:590px;width:93px;height:19px;background:#efefef;overflow:hidden"></div>
<div class="a" style="left:925px;top:590px;width:42px;height:19px;background:#efefef;overflow:hidden"><div class="t" style="left:2px;top:4px">C-Rent</div></div>
<div class="a" style="left:968px;top:590px;width:31px;height:19px;background:#efefef;overflow:hidden"><div class="t" style="right:2px;top:4px">1361</div></div>
<div class="a" style="left:1000px;top:590px;width:52px;height:19px;background:#efefef;overflow:hidden"><div class="t" style="left:2px;top:4px">Privat</div></div>
<div class="a" style="left:1053px;top:590px;width:39px;height:19px;background:#efefef;overflow:hidden"><div class="chk" style="left:13px;top:3px;border-color:#6e6e6e"></div></div>
<div class="a" style="left:1093px;top:590px;width:40px;height:19px;background:#efefef;overflow:hidden"><div class="chk" style="left:14px;top:3px;border-color:#6e6e6e"></div></div>
<div class="a" style="left:159px;top:609px;width:975px;height:1px;background:#a8a8a8"></div>
<div class="a" style="left:159px;top:610px;width:27px;height:5px;background:#fafafa;overflow:hidden"><div class="chk" style="left:7px;top:3px;border-color:#6e6e6e"></div></div>
<div class="a" style="left:187px;top:610px;width:91px;height:5px;background:#efefef;overflow:hidden"><div class="t" style="left:2px;top:2px">RE10002-5</div></div>
<div class="a" style="left:279px;top:610px;width:67px;height:5px;background:#efefef;overflow:hidden"><div class="t" style="left:2px;top:2px">27.03.2023 09:</div></div>
<div class="a" style="left:347px;top:610px;width:85px;height:5px;background:#efefef;overflow:hidden"><div class="t" style="left:2px;top:2px">Bernd Leicht</div></div>
<div class="a" style="left:433px;top:610px;width:83px;height:5px;background:#efefef;overflow:hidden"><div class="t" style="right:2px;top:2px">10027</div></div>
<div class="a" style="left:517px;top:610px;width:101px;height:5px;background:#efefef;overflow:hidden"><div class="t" style="right:2px;top:2px">803,44 €</div></div>
<div class="a" style="left:619px;top:610px;width:109px;height:5px;background:#efefef;overflow:hidden"><div class="t" style="right:2px;top:2px">803,40 €</div></div>
<div class="a" style="left:729px;top:610px;width:101px;height:5px;background:#efefef;overflow:hidden"><div class="t" style="left:2px;top:2px">Verrechnung mit RE1000</div></div>
<div class="a" style="left:831px;top:610px;width:93px;height:5px;background:#efefef;overflow:hidden"></div>
<div class="a" style="left:925px;top:610px;width:42px;height:5px;background:#efefef;overflow:hidden"><div class="t" style="left:2px;top:2px">C-Rent</div></div>
<div class="a" style="left:968px;top:610px;width:31px;height:5px;background:#efefef;overflow:hidden"><div class="t" style="right:2px;top:2px">1361</div></div>
<div class="a" style="left:1000px;top:610px;width:52px;height:5px;background:#efefef;overflow:hidden"><div class="t" style="left:2px;top:2px">Privat</div></div>
<div class="a" style="left:1053px;top:610px;width:39px;height:5px;background:#efefef;overflow:hidden"><div class="chk" style="left:13px;top:3px;border-color:#6e6e6e"></div></div>
<div class="a" style="left:1093px;top:610px;width:40px;height:5px;background:#efefef;overflow:hidden"><div class="chk" style="left:14px;top:3px;border-color:#6e6e6e"></div></div>
<div class="a" style="left:186px;top:590px;width:1px;height:25px;background:#b0b0b0"></div>
<div class="a" style="left:278px;top:590px;width:1px;height:25px;background:#b0b0b0"></div>
<div class="a" style="left:346px;top:590px;width:1px;height:25px;background:#b0b0b0"></div>
<div class="a" style="left:432px;top:590px;width:1px;height:25px;background:#b0b0b0"></div>
<div class="a" style="left:516px;top:590px;width:1px;height:25px;background:#b0b0b0"></div>
<div class="a" style="left:618px;top:590px;width:1px;height:25px;background:#b0b0b0"></div>
<div class="a" style="left:728px;top:590px;width:1px;height:25px;background:#b0b0b0"></div>
<div class="a" style="left:830px;top:590px;width:1px;height:25px;background:#b0b0b0"></div>
<div class="a" style="left:924px;top:590px;width:1px;height:25px;background:#b0b0b0"></div>
<div class="a" style="left:967px;top:590px;width:1px;height:25px;background:#b0b0b0"></div>
<div class="a" style="left:999px;top:590px;width:1px;height:25px;background:#b0b0b0"></div>
<div class="a" style="left:1052px;top:590px;width:1px;height:25px;background:#b0b0b0"></div>
<div class="a" style="left:1092px;top:590px;width:1px;height:25px;background:#b0b0b0"></div>
<div class="a" style="left:1133px;top:590px;width:1px;height:25px;background:#b0b0b0"></div>
<div class="a" style="left:159px;top:615px;width:975px;height:2px;background:#a8a8a8"></div>
<div class="a" style="left:159px;top:617px;width:975px;height:22px;background:#f0f0f0"></div>
<div class="a" style="left:188px;top:618px;width:90px;height:19px;background:#e6e9eb;border:1px solid #b8b8b8"><div class="t" style="left:2px;top:3px">Anzahl 6</div></div>
<div class="a" style="left:619px;top:618px;width:109px;height:19px;background:#e6e9eb;border:1px solid #b8b8b8"><div class="t" style="right:2px;top:3px">1105,87 €</div></div>
<div class="a" style="left:1134px;top:537px;width:17px;height:101px;background:#fff;border-left:1px solid #d8d8d8"></div>
<div class="a" style="left:1135px;top:553px;width:15px;height:1px;background:#d8d8d8"></div>
<svg class="a" style="left:1137px;top:542px" width="10" height="7"><path d="M1 6 L5 2 L9 6" fill="none" stroke="#555" stroke-width="1.3"/></svg>
<div class="a" style="left:1135px;top:554px;width:15px;height:15px;background:#dcdcdc;border:1px solid #c8c8c8"></div>
<svg class="a" style="left:1138px;top:558px" width="8" height="8"><path d="M0 1h8M0 4h8M0 7h8" stroke="#555" stroke-width="1.2"/></svg>
<div class="a" style="left:1135px;top:622px;width:15px;height:1px;background:#d8d8d8"></div>
<svg class="a" style="left:1137px;top:627px" width="10" height="7"><path d="M1 1 L5 5 L9 1" fill="none" stroke="#555" stroke-width="1.3"/></svg>
<svg class="a" style="left:0;top:0" width="1177" height="707" shape-rendering="crispEdges"><rect x="872.5" y="30.5" width="72" height="55" fill="none" stroke="#ed1620" stroke-width="3"/><path d="M880.5 87 V295.5 H851.5 L909.5 506 L966 295.5 H937.5 V87" fill="none" stroke="#ed1620" stroke-width="3" stroke-linejoin="bevel"/></svg>
</div></body></html>
